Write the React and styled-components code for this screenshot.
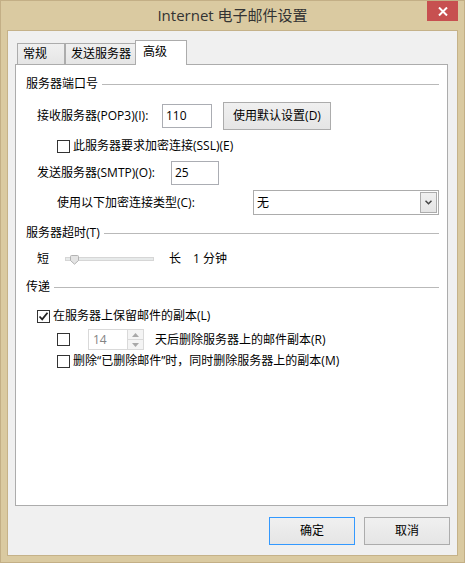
import React from "react";
import styled, { createGlobalStyle } from "styled-components";

const Global = createGlobalStyle`
  html, body { margin: 0; padding: 0; background: #dacaa1; }
  * { box-sizing: border-box; }
`;

const Window = styled.div`
  width: 465px;
  height: 563px;
  border: 1px solid #c3af86;
  background: #dacaa1;
  display: flex;
  flex-direction: column;
  font-family: "Open Sans", "Noto Sans CJK SC", sans-serif;
  font-size: 12px;
  color: #000;
`;

const TitleBar = styled.div`
  height: 29px;
  flex: none;
  display: grid;
  grid-template-columns: 1fr auto 1fr;
`;

const Title = styled.div`
  grid-column: 2;
  font-size: 15px;
  line-height: 29px;
  color: #333;
  white-space: nowrap;
`;

const CloseButton = styled.div`
  grid-column: 3;
  justify-self: end;
  width: 31px;
  height: 20px;
  margin-right: 6px;
  background: #c75050;
  display: flex;
  align-items: center;
  justify-content: center;
`;

const Client = styled.div`
  flex: 1;
  min-height: 0;
  margin: 0 6px 6px;
  border: 1px solid #c5b289;
  background: #f0f0f0;
  padding: 9px 9px 10px 7px;
  display: flex;
  flex-direction: column;
`;

const TabRow = styled.div`
  display: flex;
  align-items: flex-end;
  height: 25px;
  margin-bottom: -1px;
  padding-left: 2px;
`;

const Tab = styled.div`
  position: relative;
  width: ${(p) => p.$w}px;
  height: ${(p) => (p.$active ? 25 : 21)}px;
  margin-bottom: ${(p) => (p.$active ? 0 : 1)}px;
  margin-left: ${(p) => p.$ml || 0}px;
  border: 1px solid #acacac;
  border-bottom: none;
  background: ${(p) => (p.$active ? "#fff" : "linear-gradient(#f0f0f0, #e5e5e5)")};
  padding-left: ${(p) => (p.$active ? 7 : 5)}px;
  line-height: ${(p) => (p.$active ? 21 : 20)}px;
  white-space: nowrap;
`;

const Panel = styled.div`
  flex: 1;
  border: 1px solid #acacac;
  background: #fff;
  padding: 11px 8px 0 10px;
  display: flex;
  flex-direction: column;
`;

const GroupHeader = styled.div`
  display: flex;
  align-items: center;
  gap: 4px;
  height: 16px;
  line-height: 16px;
  margin-top: ${(p) => p.$mt || 0}px;
  white-space: nowrap;
`;

const GroupLine = styled.div`
  flex: 1;
  height: 1px;
  background: #b9b9b9;
`;

const Row = styled.div`
  display: flex;
  align-items: center;
  height: ${(p) => p.$h || 16}px;
  margin-top: ${(p) => p.$mt || 0}px;
  padding-left: ${(p) => p.$indent || 0}px;
  line-height: 16px;
  white-space: nowrap;
`;

const Label = styled.span`
  flex: none;
  width: ${(p) => (p.$w ? `${p.$w}px` : "auto")};
  margin-left: ${(p) => p.$ml || 0}px;
`;

const TextBox = styled.div`
  flex: none;
  width: ${(p) => p.$w}px;
  height: 24px;
  border: 1px solid #abadb3;
  background: #fff;
  padding-left: 3px;
  line-height: 22px;
`;

const PushButton = styled.div`
  flex: none;
  width: ${(p) => p.$w}px;
  height: 28px;
  margin-left: ${(p) => p.$ml || 0}px;
  border: 1px solid ${(p) => (p.$default ? "#3399ff" : "#acacac")};
  background: linear-gradient(#f0f0f0, #e5e5e5);
  display: flex;
  align-items: center;
  justify-content: center;
  line-height: 16px;
`;

const Box = styled.div`
  flex: none;
  width: 13px;
  height: 13px;
  border: 1px solid #333;
  background: #fff;
  display: flex;
  align-items: center;
  justify-content: center;
`;

const Select = styled.div`
  flex: none;
  width: ${(p) => p.$w}px;
  height: 25px;
  border: 1px solid #acacac;
  background: #fff;
  padding: 1px;
  display: flex;
  align-items: stretch;
`;

const SelectValue = styled.div`
  flex: 1;
  padding-left: 2px;
  line-height: 21px;
`;

const SelectArrow = styled.div`
  width: 17px;
  border: 1px solid #acacac;
  background: linear-gradient(#f0f0f0, #e5e5e5);
  display: flex;
  align-items: center;
  justify-content: center;
`;

const Track = styled.div`
  position: relative;
  flex: none;
  width: 89px;
  height: 4px;
  margin: 0 15px 0 16px;
  border: 1px solid #d6d6d6;
  background: #e7eaea;
`;

const Thumb = styled.svg`
  position: absolute;
  left: 4px;
  top: -3px;
`;

const Spin = styled.div`
  flex: none;
  width: 56px;
  height: 21px;
  margin-left: ${(p) => p.$ml || 0}px;
  border: 1px solid #d9d9d9;
  background: #fff;
  display: flex;
`;

const SpinValue = styled.div`
  flex: 1;
  padding-left: 4px;
  line-height: 19px;
  color: #838383;
`;

const SpinButtons = styled.div`
  width: 16px;
  display: flex;
  flex-direction: column;
  border-left: 1px solid #d9d9d9;
`;

const SpinHalf = styled.div`
  flex: 1;
  display: flex;
  align-items: center;
  justify-content: center;
  background: #f4f4f4;
  & + & {
    border-top: 1px solid #d9d9d9;
  }
`;

const Footer = styled.div`
  display: flex;
  justify-content: flex-end;
  gap: 9px;
  margin-top: 11px;
  margin-right: -2px;
`;

const Check = ({ checked }) => (
  <Box>
    {checked && (
      <svg width="11" height="11" viewBox="0 0 11 11">
        <path d="M1.5 5.5 L4.2 8.3 L9.5 1.8" fill="none" stroke="#222" strokeWidth="1.8" />
      </svg>
    )}
  </Box>
);

export default function App() {
  return (
    <>
      <Global />
      <Window>
        <TitleBar>
          <Title>Internet 电子邮件设置</Title>
          <CloseButton>
            <svg width="10" height="9" viewBox="0 0 10 9">
              <path d="M1 0.5 L9 8.5 M9 0.5 L1 8.5" stroke="#fff" strokeWidth="2" />
            </svg>
          </CloseButton>
        </TitleBar>
        <Client>
          <TabRow>
            <Tab $w={48}>常规</Tab>
            <Tab $w={71}>发送服务器</Tab>
            <Tab $w={52} $ml={-1} $active>
              高级
            </Tab>
          </TabRow>
          <Panel>
            <GroupHeader>
              服务器端口号
              <GroupLine />
            </GroupHeader>
            <Row $h={28} $mt={10} $indent={11}>
              <Label $w={125}>接收服务器(POP3)(I):</Label>
              <TextBox $w={50}>110</TextBox>
              <PushButton $w={108} $ml={11}>
                使用默认设置(D)
              </PushButton>
            </Row>
            <Row $mt={8} $indent={31}>
              <Check />
              <Label $ml={3}>此服务器要求加密连接(SSL)(E)</Label>
            </Row>
            <Row $h={24} $mt={7} $indent={11}>
              <Label $w={134}>发送服务器(SMTP)(O):</Label>
              <TextBox $w={48}>25</TextBox>
            </Row>
            <Row $h={25} $mt={5} $indent={31}>
              <Label $w={196}>使用以下加密连接类型(C):</Label>
              <Select $w={186}>
                <SelectValue>无</SelectValue>
                <SelectArrow>
                  <svg width="7" height="5" viewBox="0 0 7 5">
                    <path d="M0.5 0.8 L3.5 3.8 L6.5 0.8" fill="none" stroke="#444" strokeWidth="1.5" />
                  </svg>
                </SelectArrow>
              </Select>
            </Row>
            <GroupHeader $mt={10}>
              服务器超时(T)
              <GroupLine />
            </GroupHeader>
            <Row $mt={10} $indent={11}>
              <Label>短</Label>
              <Track>
                <Thumb width="9" height="10" viewBox="0 0 9 10">
                  <path d="M1.5 0.5 H7.5 Q8.5 0.5 8.5 1.5 V5.5 L4.5 9.2 L0.5 5.5 V1.5 Q0.5 0.5 1.5 0.5 Z" fill="#e4e4e4" stroke="#b3b3b3" />
                </Thumb>
              </Track>
              <Label>长</Label>
              <Label $ml={12}>1 分钟</Label>
            </Row>
            <GroupHeader $mt={12}>
              传递
              <GroupLine />
            </GroupHeader>
            <Row $mt={13} $indent={11}>
              <Check checked />
              <Label $ml={3}>在服务器上保留邮件的副本(L)</Label>
            </Row>
            <Row $h={21} $mt={5} $indent={31}>
              <Check />
              <Spin $ml={18}>
                <SpinValue>14</SpinValue>
                <SpinButtons>
                  <SpinHalf>
                    <svg width="7" height="4" viewBox="0 0 7 4">
                      <path d="M0 4 L3.5 0 L7 4 Z" fill="#a8a8a8" />
                    </svg>
                  </SpinHalf>
                  <SpinHalf>
                    <svg width="7" height="4" viewBox="0 0 7 4">
                      <path d="M0 0 L3.5 4 L7 0 Z" fill="#a8a8a8" />
                    </svg>
                  </SpinHalf>
                </SpinButtons>
              </Spin>
              <Label $ml={11}>天后删除服务器上的邮件副本(R)</Label>
            </Row>
            <Row $mt={3} $indent={31}>
              <Check />
              <Label $ml={3}>删除“已删除邮件”时，同时删除服务器上的副本(M)</Label>
            </Row>
          </Panel>
          <Footer>
            <PushButton $w={86} $default>
              确定
            </PushButton>
            <PushButton $w={86}>取消</PushButton>
          </Footer>
        </Client>
      </Window>
    </>
  );
}
